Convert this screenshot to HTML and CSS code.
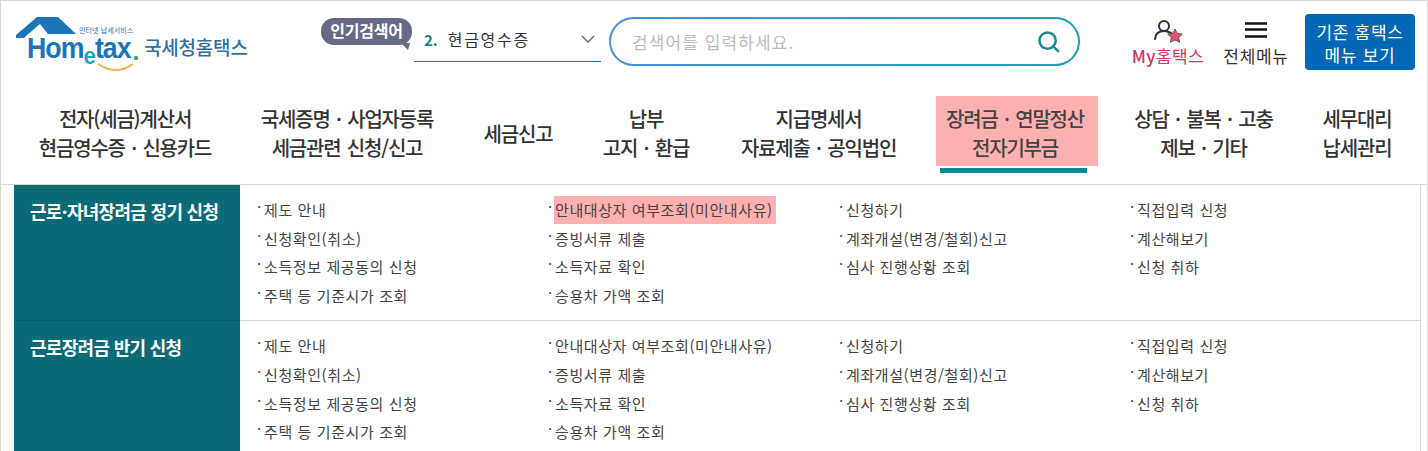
FILE: index.html
```html
<!DOCTYPE html>
<html lang="ko">
<head>
  <meta charset="UTF-8">
  <title>국세청 홈택스</title>
  <link rel="stylesheet" href="styles.css">
</head>
<body>
  <div class="page">
    <header class="top">
      <a class="logo">
        <svg class="logo-mark" viewBox="0 0 130 60">
          <path d="M1 20 L22 2 L43 2 L61 19 L33 19 L25 9 L11 21 L9 23 L1 23 Z" fill="#1b74b8"/>
          <path d="M83 49 Q101 61 118 49" fill="none" stroke="#f2ac4a" stroke-width="2"/>
          <circle cx="121" cy="43" r="2.200" fill="#4aa84a"/>
        </svg>
        <span class="logo-small">인터넷 납세서비스</span>
        <span class="logo-word">Hom<i>e</i>tax</span>
        <span class="logo-name">국세청홈택스</span>
      </a>
      <div class="search-area">
        <span class="hot-label">인기검색어</span>
        <div class="hot-select">
          <b>2.</b><span>현금영수증</span>
          <svg viewBox="0 0 14 8"><path d="M1 1l6 6 6-6" fill="none" stroke="#666" stroke-width="1.3"/></svg>
        </div>
        <div class="search-box">
          <span>검색어를 입력하세요.</span>
          <svg viewBox="0 0 24 24"><circle cx="11" cy="11" r="8.500" fill="none" stroke="#1f8a8f" stroke-width="2.600"/><path d="M17 17l5 5" stroke="#1f8a8f" stroke-width="2.600" stroke-linecap="round"/></svg>
        </div>
      </div>
      <div class="top-links">
        <a class="my-link">
          <svg viewBox="0 0 30 26"><circle cx="11" cy="7" r="5" fill="none" stroke="#2b3044" stroke-width="2"/><path d="M2 20c.5-5 4-8 9-8 3 0 5 1 7 2" fill="none" stroke="#2b3044" stroke-width="2" stroke-linecap="round"/><path d="M22 10l2.300 4.400 5 .7-3.600 3.400.9 4.800-4.600-2.300-4.600 2.300.9-4.800-3.600-3.400 5-.7z" fill="#ee4f72" stroke="#444" stroke-width=".8"/></svg>
          <span><b>My</b>홈택스</span>
        </a>
        <a class="all-link">
          <svg viewBox="0 0 22 16"><path d="M0 1.500h22M0 7.500h22M0 14.500h22" stroke="#111" stroke-width="2.400"/></svg>
          <span>전체메뉴</span>
        </a>
        <a class="old-btn">기존 홈택스<br>메뉴 보기</a>
      </div>
    </header>

    <nav class="gnb">
      <a class="g1">전자(세금)계산서<br>현금영수증 · 신용카드</a>
      <a class="g2">국세증명 · 사업자등록<br>세금관련 신청/신고</a>
      <a class="g3">세금신고</a>
      <a class="g4">납부<br>고지 · 환급</a>
      <a class="g5">지급명세서<br>자료제출 · 공익법인</a>
      <a class="g6"><span>장려금 · 연말정산<br>전자기부금</span></a>
      <a class="g7">상담 · 불복 · 고충<br>제보 · 기타</a>
      <a class="g8">세무대리<br>납세관리</a>
    </nav>

    <section class="menu-row">
      <h2>근로·자녀장려금 정기 신청</h2>
      <ul>
        <li>제도 안내</li><li><mark>안내대상자 여부조회(미안내사유)</mark></li><li>신청하기</li><li>직접입력 신청</li>
        <li>신청확인(취소)</li><li>증빙서류 제출</li><li>계좌개설(변경/철회)신고</li><li>계산해보기</li>
        <li>소득정보 제공동의 신청</li><li>소득자료 확인</li><li>심사 진행상황 조회</li><li>신청 취하</li>
        <li>주택 등 기준시가 조회</li><li>승용차 가액 조회</li>
      </ul>
    </section>
    <section class="menu-row">
      <h2>근로장려금 반기 신청</h2>
      <ul>
        <li>제도 안내</li><li>안내대상자 여부조회(미안내사유)</li><li>신청하기</li><li>직접입력 신청</li>
        <li>신청확인(취소)</li><li>증빙서류 제출</li><li>계좌개설(변경/철회)신고</li><li>계산해보기</li>
        <li>소득정보 제공동의 신청</li><li>소득자료 확인</li><li>심사 진행상황 조회</li><li>신청 취하</li>
        <li>주택 등 기준시가 조회</li><li>승용차 가액 조회</li>
      </ul>
    </section>
  </div>
</body>
</html>
```

FILE: styles.css
```css
* {
  margin: 0;
  padding: 0;
  box-sizing: border-box;
}

html, body {
  height: 451px;
  overflow: hidden;
}

body {
  background: #fff;
  font-family: "Noto Sans CJK KR", "Noto Sans", sans-serif;
  color: #222;
}

.page {
  height: 451px;
  border: 1px solid #d6d6d6;
  border-bottom: none;
  overflow: hidden;
}

/* top bar */
.top {
  display: flex;
  align-items: flex-start;
  height: 95px;
}

.logo {
  position: relative;
  display: block;
  width: 320px;
  height: 70px;
  flex: none;
}

.logo-mark {
  position: absolute;
  left: 14px;
  top: 14px;
  width: 130px;
  height: 60px;
}

.logo-small {
  position: absolute;
  left: 78px;
  top: 25px;
  font-size: 7px;
  line-height: 9px;
  letter-spacing: 0.100px;
  color: #2f6fb0;
  white-space: nowrap;
}

.logo-word {
  position: absolute;
  left: 26px;
  top: 35px;
  font-family: "Liberation Sans", sans-serif;
  font-size: 29px;
  line-height: 24px;
  font-weight: 700;
  letter-spacing: -1px;
  color: #1b74b8;
  transform: scaleX(0.92);
  transform-origin: left;
}

.logo-word i {
  font-style: normal;
  font-size: 24px;
  color: #1da3c4;
  position: relative;
  top: 6px;
}

.logo-name {
  position: absolute;
  left: 143px;
  top: 35px;
  font-size: 19px;
  line-height: 22px;
  font-weight: 500;
  letter-spacing: -0.200px;
  color: #2f6fa8;
  white-space: nowrap;
}

.search-area {
  display: flex;
  align-items: flex-start;
  width: 760px;
  flex: none;
  padding-top: 16px;
}

.hot-label {
  position: relative;
  width: 91px;
  height: 27px;
  margin-top: 1px;
  border-radius: 13px;
  background: #666a85;
  color: #fff;
  font-size: 16px;
  line-height: 25px;
  font-weight: 700;
  text-align: center;
  letter-spacing: -0.200px;
  flex: none;
}

.hot-label::after {
  content: "";
  position: absolute;
  right: 2px;
  bottom: -5px;
  border-top: 7px solid #666a85;
  border-left: 7px solid transparent;
  border-right: 2px solid transparent;
}

.hot-select {
  display: flex;
  align-items: center;
  width: 187px;
  height: 45px;
  margin-left: 2px;
  padding-left: 10px;
  border-bottom: 1px solid #0f7f8c;
  font-size: 16px;
  letter-spacing: 1.700px;
  color: #333;
  flex: none;
}

.hot-select b {
  color: #0f7f8c;
  margin-right: 10px;
  font-size: 15px;
  letter-spacing: 0;
}

.hot-select svg {
  width: 14px;
  height: 8px;
  margin-left: auto;
  margin-right: 6px;
}

.search-box {
  display: flex;
  align-items: center;
  justify-content: space-between;
  width: 471px;
  height: 49px;
  margin-left: 8px;
  padding: 0 18px 0 21px;
  border: 2px solid transparent;
  border-radius: 25px;
  background: linear-gradient(#fff, #fff) padding-box, linear-gradient(90deg, #4a90d9, #17a3b0) border-box;
  color: #bbb;
  font-size: 17px;
  letter-spacing: 1.100px;
  flex: none;
}

.search-box svg {
  width: 23px;
  height: 23px;
}

.top-links {
  display: flex;
  align-items: flex-start;
}

.my-link, .all-link {
  display: flex;
  flex-direction: column;
  align-items: center;
  font-size: 17px;
  line-height: 20px;
  white-space: nowrap;
}

.my-link {
  width: 80px;
  margin-left: 47px;
  padding-top: 18px;
  color: #d8325f;
  letter-spacing: 0.400px;
}

.my-link b {
  font-weight: 500;
}

.my-link svg {
  width: 30px;
  height: 26px;
  margin-bottom: 1px;
}

.all-link {
  width: 72px;
  margin-left: 12px;
  padding-top: 21px;
  color: #333;
  letter-spacing: 0.700px;
}

.all-link svg {
  width: 22px;
  height: 16px;
  margin-bottom: 8px;
}

.old-btn {
  width: 110px;
  height: 56px;
  margin-left: 13px;
  margin-top: 13px;
  border-radius: 4px;
  background: #0068b7;
  color: #fff;
  font-size: 17px;
  letter-spacing: 0.700px;
  line-height: 23px;
  padding-top: 6px;
  text-align: center;
  white-space: nowrap;
}

/* main menu */
.gnb {
  display: flex;
  align-items: flex-start;
  height: 89px;
  border-bottom: 1px solid #d6d6d6;
  font-size: 20px;
  line-height: 29px;
  font-weight: 500;
  letter-spacing: -1.200px;
  word-spacing: 2px;
  text-align: center;
  color: #333;
}

.gnb a {
  display: block;
  flex: none;
  padding-top: 8px;
  white-space: nowrap;
}

.g1 { width: 248px; }
.g2 { width: 196px; }
.g3 { width: 146px; }
.gnb .g3 { padding-top: 23px; }
.g4 { width: 110px; }
.g5 { width: 235px; }
.g6 { width: 162px; }
.g7 { width: 211px; }
.g8 { width: 96px; }

.gnb .g6 {
  position: relative;
  height: 77px;
  padding-top: 0;
  color: #444;
}

.g6 span {
  display: block;
  height: 70px;
  padding: 8px 4px 0 0;
  background: #ffb0b0;
}

.g6::after {
  content: "";
  position: absolute;
  left: 4px;
  right: 11px;
  bottom: 0;
  height: 5px;
  background: #0b8a96;
}

/* sub menu rows */
.menu-row {
  display: flex;
  margin-left: 13px;
  margin-right: 6px;
  border-right: 1px solid #d6d6d6;
  border-bottom: 1px solid #d6d6d6;
}

.menu-row h2 {
  width: 226px;
  flex: none;
  margin-bottom: -1px;
  padding: 12px 0 0 16px;
  background: #0a6a78;
  border-bottom: 1px solid #085a66;
  color: #fff;
  font-size: 18px;
  line-height: 28px;
  font-weight: 700;
  letter-spacing: -0.700px;
  white-space: nowrap;
}

.menu-row ul {
  flex: 1;
  display: grid;
  grid-template-columns: 291px 291px 291px 1fr;
  grid-auto-rows: 28.6px;
  padding: 11px 0 10px 17px;
  list-style: none;
  font-size: 15px;
  line-height: 28.6px;
  color: #444;
  letter-spacing: 0.600px;
}

.menu-row li {
  position: relative;
  padding-left: 7px;
  white-space: nowrap;
}

.menu-row li::before {
  content: "·";
  position: absolute;
  left: 0;
  top: -3px;
}

mark {
  background: #ffb0b0;
  color: #444;
  display: inline-block;
  margin-left: -1px;
  padding: 0 3px 0 1px;
  line-height: 28px;
}
```
